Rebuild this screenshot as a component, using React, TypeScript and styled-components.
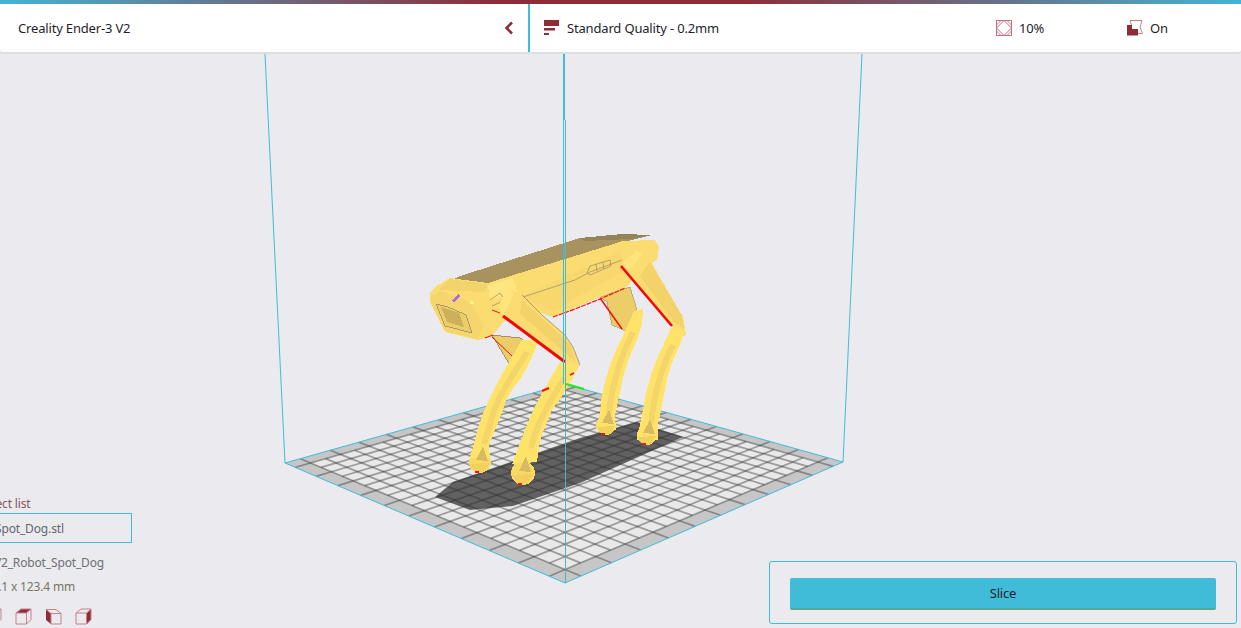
import React from "react";
import styled, { createGlobalStyle } from "styled-components";

const Global = createGlobalStyle`
  html, body { margin: 0; padding: 0; background: #eaeaef; }
  #root { width: 1241px; height: 628px; }
`;

const Page = styled.div`
  position: relative;
  width: 1241px;
  height: 628px;
  overflow: hidden;
  display: flex;
  flex-direction: column;
  background: #eaeaef;
  font-family: "Noto Sans", "Open Sans", sans-serif;
  font-size: 13px;
  letter-spacing: -0.17px;
  color: #1e1e2e;
`;

const Accent = styled.div`
  position: relative;
  height: 4px;
  flex: none;
  background: linear-gradient(90deg, #43b4d6 0%, #8e2d38 40%, #8e2d38 60%, #43b4d6 100%);
`;

const Toolbar = styled.header`
  position: relative;
  flex: none;
  height: 48px;
  display: flex;
  background: #fff;
  box-shadow: 0 2px 0 #dedee2;
  border-radius: 0 0 2px 2px;
`;

const PrinterPicker = styled.div`
  width: 530px;
  box-sizing: border-box;
  padding: 0 14px 0 18px;
  display: flex;
  align-items: center;
  justify-content: space-between;
  border-right: 2px solid #40bcd8;
`;

const SettingsBar = styled.div`
  flex: 1;
  display: flex;
  align-items: center;
  padding-left: 14px;
`;

const Setting = styled.div<{ $width?: number; $gap: number }>`
  display: flex;
  align-items: center;
  gap: ${(p) => p.$gap}px;
  flex: ${(p) => (p.$width ? `0 0 ${p.$width}px` : "1")};
`;

const Footer = styled.div`
  position: relative;
  flex: 1;
  display: flex;
  justify-content: space-between;
  align-items: flex-end;
  padding: 0 4px 4px 0;
`;

const ObjectPanel = styled.section`
  width: 232px;
  margin-left: -100px;
  display: flex;
  flex-direction: column;
  font-size: 12px;
  letter-spacing: -0.15px;
`;

const PanelLabel = styled.div<{ $inset?: number; $tint?: string; $mt?: number }>`
  height: 16px;
  line-height: 16px;
  margin-top: ${(p) => p.$mt ?? 0}px;
  white-space: nowrap;
  padding-left: ${(p) => p.$inset ?? 0}px;
  color: ${(p) => p.$tint ?? "#6f6f74"};
`;

const ObjectRow = styled.div<{ $inset: number }>`
  height: 30px;
  margin-top: 1px;
  box-sizing: border-box;
  border: 1px solid #40bcd8;
  display: flex;
  align-items: center;
  padding-left: ${(p) => p.$inset}px;
  white-space: nowrap;
  color: #66666a;
`;

const ViewButtons = styled.div`
  display: flex;
  gap: 12px;
  margin: 13px 0 -1px 85px;
`;

const SlicePanel = styled.section`
  width: 468px;
  height: 63px;
  box-sizing: border-box;
  border: 1px solid #40bcd8;
  border-radius: 3px;
  padding: 16px 20px 0;
`;

const SliceButton = styled.button`
  display: block;
  width: 100%;
  height: 32px;
  padding: 0;
  border: none;
  border-bottom: 2px solid #55a994;
  border-radius: 2px;
  background: #40bcd8;
  color: #1c1c2e;
  font: inherit;
  letter-spacing: -0.17px;
`;

const Scene = styled.svg`
  position: absolute;
  inset: 0;
  width: 1241px;
  height: 628px;
`;

type P = [number, number];

function makeProjector(p0: P, p1: P, p2: P, p3: P) {
  const dx1 = p1[0] - p2[0];
  const dx2 = p3[0] - p2[0];
  const sx = p0[0] - p1[0] + p2[0] - p3[0];
  const dy1 = p1[1] - p2[1];
  const dy2 = p3[1] - p2[1];
  const sy = p0[1] - p1[1] + p2[1] - p3[1];
  const det = dx1 * dy2 - dx2 * dy1;
  const g = (sx * dy2 - dx2 * sy) / det;
  const h = (dx1 * sy - sx * dy1) / det;
  const a = p1[0] - p0[0] + g * p1[0];
  const b = p3[0] - p0[0] + h * p3[0];
  const d = p1[1] - p0[1] + g * p1[1];
  const e = p3[1] - p0[1] + h * p3[1];
  return (u: number, v: number): P => {
    const w = g * u + h * v + 1;
    return [(a * u + b * v + p0[0]) / w, (d * u + e * v + p0[1]) / w];
  };
}

const project = makeProjector([285, 463], [565, 583], [843, 462], [565, 384]);
const CELLS = 22;
const pts = (list: P[]) => list.map((q) => q.map((n) => n.toFixed(1)).join(",")).join(" ");

const Plate = () => {
  const b = 1 / CELLS;
  const lines: React.ReactNode[] = [];
  const seg = (key: string, p: P, q: P) => (
    <line key={key} x1={p[0]} y1={p[1]} x2={q[0]} y2={q[1]} />
  );
  for (let i = 1; i < CELLS; i++) {
    const t = i / CELLS;
    lines.push(seg(`u${i}`, project(t, b), project(t, 1 - b)));
    lines.push(seg(`v${i}`, project(b, t), project(1 - b, t)));
    if (i % 2 === 1) {
      lines.push(seg(`ua${i}`, project(t, 0), project(t, b)));
      lines.push(seg(`ub${i}`, project(t, 1 - b), project(t, 1)));
      lines.push(seg(`va${i}`, project(0, t), project(b, t)));
      lines.push(seg(`vb${i}`, project(1 - b, t), project(1, t)));
    }
  }
  return (
    <g>
      <polygon
        points={pts([project(0, 0), project(1, 0), project(1, 1), project(0, 1)])}
        fill="#c6c6c6"
      />
      <polygon
        points={pts([project(b, b), project(1 - b, b), project(1 - b, 1 - b), project(b, 1 - b)])}
        fill="#e9e9e9"
      />
      <path
        d="M435,497 L453,482 L580,438 L637,422 L683,437 L580,483 L513,506 L470,510 Z"
        fill="#616161"
      />
      <g stroke="#303030" strokeOpacity={0.42} strokeWidth={1.7}>
        {lines}
      </g>
    </g>
  );
};

const LegShape = styled.g`
  shape-rendering: crispEdges;
`;

const Leg = ({ d, stripe, foot, r }: { d: string; stripe: string; foot: P; r: number }) => (
  <LegShape>
    <circle cx={foot[0]} cy={foot[1]} r={r} fill="#f7d964" />
    <path d={d} fill="#ffe268" />
    <path d={stripe} fill="none" stroke="#f3d56c" strokeWidth={6} />
    <path
      d={`M${foot[0] + 3},${foot[1] - r - 5} L${foot[0] + 8},${foot[1] - 1} L${foot[0] - 4},${foot[1] - 2} Z`}
      fill="#d7ba62"
    />
    <path
      d={`M${foot[0] - r + 1},${foot[1] + 2} L${foot[0] + r - 1},${foot[1] + 1} L${foot[0] + 4},${foot[1] + r - 1} L${foot[0] - 6},${foot[1] + r - 2} Z`}
      fill="#f2d05e"
    />
    <path d={`M${foot[0] - 5},${foot[1] + r - 1} h4`} stroke="#ee1616" strokeWidth={1.4} />
  </LegShape>
);

const Body = styled.g`
  shape-rendering: crispEdges;
`;

const Dog = () => (
  <g>
    {/* far legs behind the body */}
    <Body>
      <path d="M600,297 L630,287 L637,310 L628,332 L612,325 L607,302 Z" fill="#eccd68" stroke="#9a8a5c" strokeWidth={0.6} />
      <path d="M492,335 L520,338 L531,345 L516,366 L508,362 Z" fill="#eccc68" stroke="#8c8060" strokeWidth={0.8} />
    </Body>
    <path d="M600,298 L622,329" stroke="#f20d0d" strokeWidth={1.5} />
    <path d="M492,337 L512,356" stroke="#e81212" strokeWidth={1} />
    <Leg
      d="M522,340 L538,340 C534,355 528,365 521,378 C512,388 505,400 503,410 L489,445 L490,458 L470,458 L476,436 C480,420 486,405 491,396 C497,382 510,360 522,340 Z"
      stripe="M527,352 C514,374 500,392 493,414 L484,444"
      foot={[480, 462]}
      r={11}
    />
    <Leg
      d="M634,311 L643,309 L642,325 L636,342 C630,355 625,368 623,378 L615,415 L616,430 L596,430 L600,412 C601,395 604,385 608,372 C612,358 616,350 622,338 Z"
      stripe="M633,332 C620,358 612,385 609,414"
      foot={[606, 425]}
      r={10}
    />
    {/* body */}
    <Body>
      <polygon points="447,282 460,276 580,238 622,234 652,235 620,243 488,285" fill="#a8935e" />
      <polygon points="580,238 622,234 652,235 630,239 585,241" fill="#94825a" />
      <polygon
        points="430,293 435,287 450,278 488,283 623,241 655,240 659,247 657,260 640,270 627,287 600,297 553,317 517,305 493,335 483,339 477,340 445,332 430,302"
        fill="#fbdc70"
      />
      <polygon points="450,279 488,284 485,292 438,290" fill="#f3d46c" />
      <polygon points="488,285 512,278 518,292 490,300" fill="#ffe57f" />
      <polygon points="519,297 620,252 625,270 590,290 553,312" fill="#f8d86e" />
      <polygon points="431,296 442,291 470,302 484,325 478,339 445,331 431,303" fill="#f5d66e" />
      <polygon points="436,304 448,307 466,315 472,333 445,326" fill="#eccd67" stroke="#9a8a62" strokeWidth={0.8} />
      <polygon points="441,307 459,313 464,327 447,322" fill="#cdb05c" />
      <polygon points="452,300 459,294 460,296 454,303" fill="#b06ce8" />
    </Body>
    <rect x="470" y="301" width="4" height="3" fill="#fff07a" />
    <g fill="none" stroke="#a59462" strokeWidth={0.8}>
      <path d="M520,298 L575,280 L590,272 L622,260" />
      <path d="M587,273 L590,266 L610,260 L611,266 L590,275 Z" />
      <path d="M596,264 L597,271 M603,262 L604,269" />
      <path d="M490,300 L500,293 L505,300 L492,306" />
    </g>
    <path d="M553,317 L575,309 L600,299 L625,288" stroke="#f01313" strokeWidth={1.2} fill="none" strokeDasharray="5 1" />
    <path d="M485,338 L493,335" stroke="#f01313" strokeWidth={1.2} />
    <path d="M492,310 L500,313" stroke="#e81818" strokeWidth={1} />
    {/* near upper front leg */}
    <Body>
      <polygon points="499,305 505,292 510,290 522,295 542,315 565,335 573,347 580,365 575,373 565,375 565,362 500,315" fill="#fbdc72" />
      <polygon points="499,305 505,292 510,290 514,293 506,310 502,316" fill="#ffe57c" />
      <polygon points="522,300 570,344 576,362 566,354 520,314" fill="#f3d269" />
    </Body>
    <path d="M503,316 L565,362" stroke="#f20606" strokeWidth={3} />
    <path d="M522,295 L542,315 L565,335 L573,347 L580,365" fill="none" stroke="#8d8262" strokeWidth={0.7} />
    {/* near upper back leg */}
    <Body>
      <polygon points="623,262 637,251 647,255 683,317 686,335 677,340 672,326 623,267" fill="#fbdc72" />
      <polygon points="623,262 637,251 642,254 630,270 625,268" fill="#ffe57c" />
      <polygon points="650,262 682,316 684,328 674,322 640,276" fill="#f3d269" />
    </Body>
    <path d="M621,266 L672,326" stroke="#f20606" strokeWidth={2.6} />
    <Leg
      d="M671,328 L685,330 L681,342 C676,355 670,365 668,375 L658,425 L658,440 L637,440 L643,410 C645,395 648,385 652,372 C656,358 664,345 671,328 Z"
      stripe="M673,345 C661,368 654,395 651,424"
      foot={[647, 435]}
      r={10}
    />
    <Leg
      d="M560,362 L578,366 L572,380 C563,395 556,405 552,410 L540,440 L537,462 L512,464 L522,438 C528,420 535,405 545,388 Z"
      stripe="M564,378 C550,402 537,422 531,448"
      foot={[523, 473]}
      r={12}
    />
    <path d="M570,375 L574,373" stroke="#ee1111" strokeWidth={1.4} />
    <path d="M542,391 L549,388" stroke="#f01010" strokeWidth={2} />
    <path d="M566,384 L584,389" stroke="#1fe81f" strokeWidth={2} />
  </g>
);

const ViewerScene = () => (
  <Scene viewBox="0 0 1241 628">
    <Plate />
    <polyline
      points="265,54 285,463 565,583 843,462 862,54"
      fill="none"
      stroke="#40bcd8"
      strokeWidth={1}
    />
    <path d="M285,463 L565,384 L843,462" stroke="#40bcd8" strokeWidth={1} fill="none" />
    <Dog />
    <path d="M564,54 V120" stroke="#40bcd8" strokeWidth={2} />
    <path d="M563.5,120 V384 M565.5,120 V384" stroke="#40bcd8" strokeWidth={1} />
    <path d="M565.5,384 V583" stroke="#5aaec4" strokeWidth={1} />
  </Scene>
);

const RED = "#8e2d38";
const PALE = "#c98088";

const Chevron = () => (
  <svg width="10" height="14" viewBox="0 0 10 14">
    <path d="M8,1.5 L2.5,7 L8,12.5" fill="none" stroke={RED} strokeWidth={2.6} />
  </svg>
);

const ProfileIcon = () => (
  <svg width="15" height="16" viewBox="0 0 15 16">
    <rect x="0" y="0" width="15" height="6" fill={RED} />
    <rect x="0" y="8" width="11" height="2.5" fill={RED} />
    <rect x="0" y="13" width="5" height="2" fill={RED} />
  </svg>
);

const InfillIcon = () => (
  <svg width="16" height="16" viewBox="0 0 16 16">
    <rect x="0.5" y="0.5" width="15" height="15" fill="none" stroke="#c0707a" />
    <path
      d="M0.5,5 L5,0.5 M11,0.5 L15.5,5 M15.5,11 L11,15.5 M5,15.5 L0.5,11 M0.5,8 L8,0.5 M8,0.5 L15.5,8 M15.5,8 L8,15.5 M8,15.5 L0.5,8"
      fill="none"
      stroke="#c0707a"
      strokeWidth={1}
    />
  </svg>
);

const SupportIcon = () => (
  <svg width="16" height="16" viewBox="0 0 16 16">
    <path d="M3,0.5 H15 L13,7 L15.5,13.5 H10" fill="none" stroke={PALE} strokeWidth={1} />
    <path d="M3,0.5 L4.5,5" fill="none" stroke={PALE} strokeWidth={1} />
    <path d="M0,5 H5 V9 H11 V15.5 H0 Z" fill={RED} />
  </svg>
);

const Cube = ({ face }: { face: "top" | "left" | "right" | "front" }) => (
  <svg width="18" height="17" viewBox="0 0 18 17">
    {face === "top" && <path d="M1,5 L6,1 H16 L11,5 Z" fill={RED} />}
    {face === "left" && <path d="M1,1.5 L6,5.5 V16 L1,12 Z" fill={RED} />}
    {face === "right" && <path d="M12,5 L16,1 V11.5 L12,16 Z" fill={RED} />}
    {face === "front" && <rect x="1" y="5" width="11" height="11" fill={RED} />}
    {face === "left" ? (
      <path d="M1,1.5 H11 L16,5.5 V16 H6 V5.5 H16 M6,5.5 L1,1.5" fill="none" stroke={PALE} />
    ) : (
      <path d="M1,5 L6,1 H16 V11.5 L11.5,16 H1 Z M1,5 H11.5 V16 M11.5,5 L16,1" fill="none" stroke={PALE} />
    )}
  </svg>
);

export default function App() {
  return (
    <Page>
      <Global />
      <ViewerScene />
      <Accent />
      <Toolbar>
        <PrinterPicker>
          <span>Creality Ender-3 V2</span>
          <Chevron />
        </PrinterPicker>
        <SettingsBar>
          <Setting $gap={8}>
            <ProfileIcon />
            <span>Standard Quality - 0.2mm</span>
          </Setting>
          <Setting $width={131} $gap={7}>
            <InfillIcon />
            <span>10%</span>
          </Setting>
          <Setting $width={114} $gap={7}>
            <SupportIcon />
            <span>On</span>
          </Setting>
        </SettingsBar>
      </Toolbar>
      <Footer>
        <ObjectPanel>
          <PanelLabel $inset={76} $tint="#84585c">Object list</PanelLabel>
          <ObjectRow $inset={3}>CE3E3V2_Robot_Spot_Dog.stl</ObjectRow>
          <PanelLabel $inset={60} $mt={12}>CE3E3V2_Robot_Spot_Dog</PanelLabel>
          <PanelLabel $inset={36} $mt={8} $tint="#77775f">122.1 x 122.1 x 123.4 mm</PanelLabel>
          <ViewButtons>
            <Cube face="front" />
            <Cube face="top" />
            <Cube face="left" />
            <Cube face="right" />
          </ViewButtons>
        </ObjectPanel>
        <SlicePanel>
          <SliceButton>Slice</SliceButton>
        </SlicePanel>
      </Footer>
    </Page>
  );
}
